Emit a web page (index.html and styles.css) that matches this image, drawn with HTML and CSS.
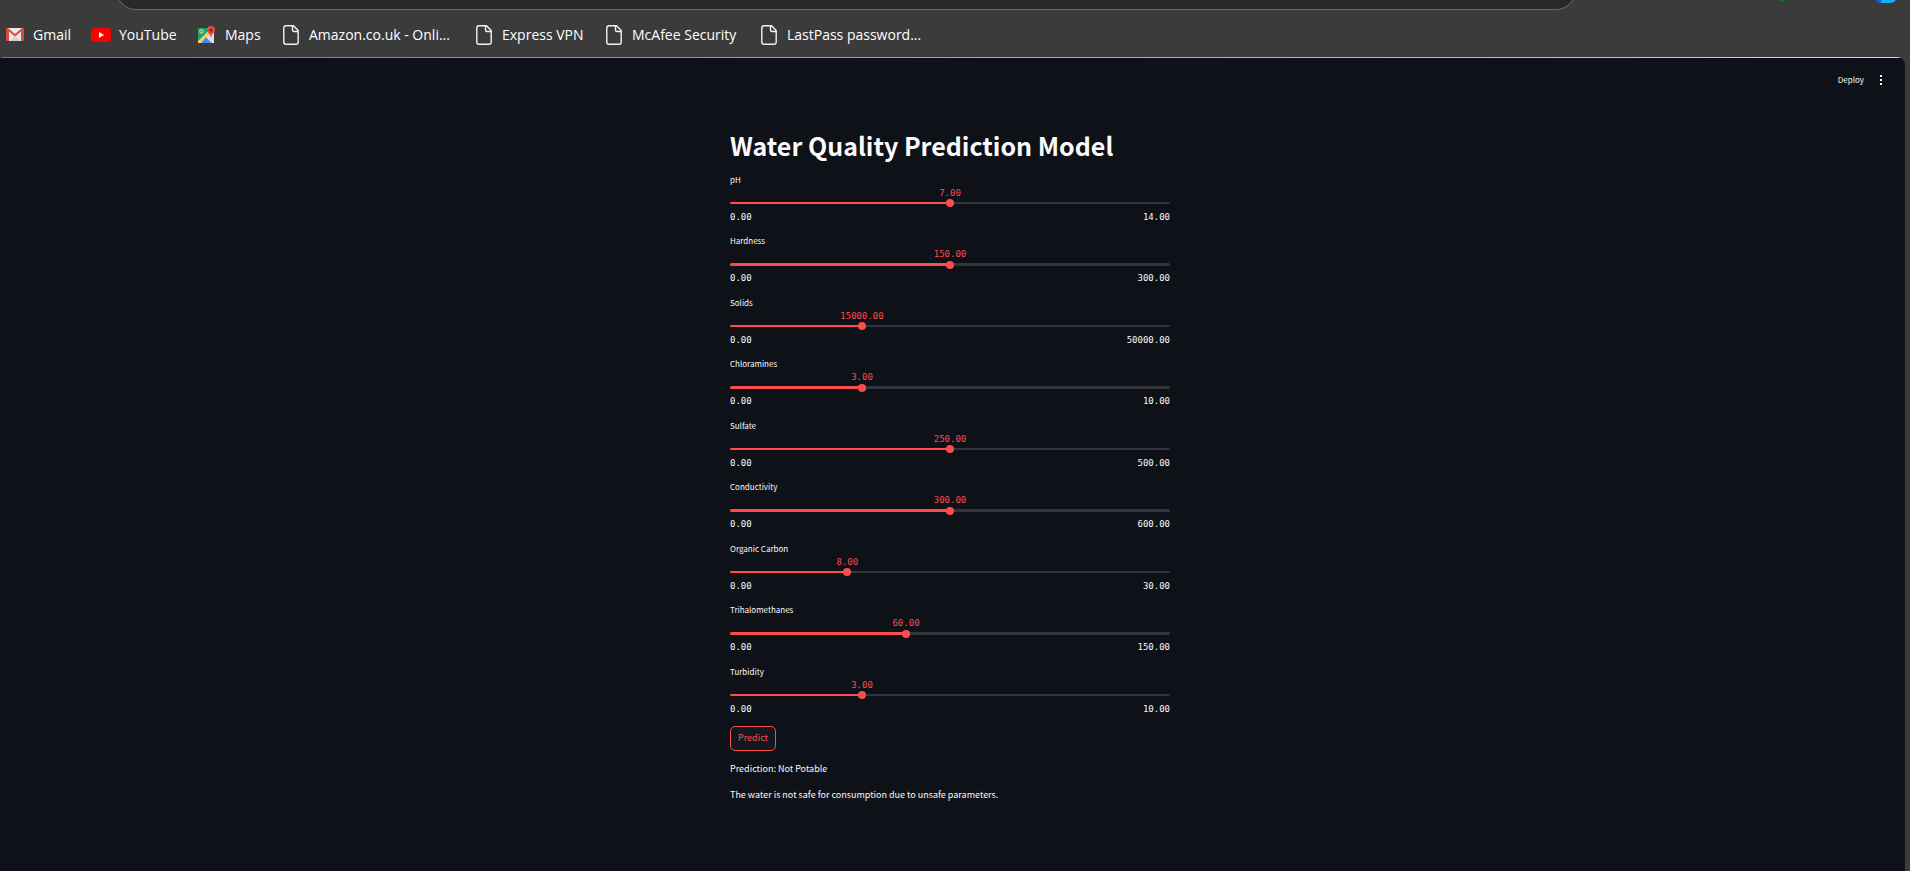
FILE: index.html
```html
<!DOCTYPE html>
<html lang="en">
<head>
<meta charset="utf-8">
<title>Water Quality Prediction Model</title>
<link rel="stylesheet" href="styles.css">
</head>
<body>
<header class="browser">
  <div class="toolbar">
    <div class="address"></div>
    <svg class="toolbar-icons" viewBox="0 0 120 10" aria-hidden="true"><circle cx="2" cy="-6" r="7" fill="#107c10"/><path d="M96 0h20q-2 3-5 3h-10q-3 0-5-3z" fill="#12b0f5"/><path d="M96 0h6l-2 3q-3-1-4-3z" fill="#2456e0"/></svg>
  </div>
  <nav class="bookmarks" aria-label="Bookmarks">
    <a class="bookmark" href="#"><svg class="icon-wide" viewBox="0 0 20 20"><path d="M2 3h16v13H2z" fill="#e9e9e9"/><path d="M5 16l5-5 5 5" fill="#d2d2d2"/><path d="M1 4q0-1 1-1h1l7 6 7-6h1q1 0 1 1v11q0 1-1 1h-2V6.500l-6 5-6-5V16H2q-1 0-1-1z" fill="#dc4a3f"/></svg>Gmail</a>
    <a class="bookmark" href="#"><svg class="icon-wide" viewBox="0 0 20 20"><rect y="3" width="20" height="14" rx="4" fill="#f00"/><path d="M8 7l5 3-5 3z" fill="#fff"/></svg>YouTube</a>
    <a class="bookmark" href="#"><svg class="icon-wide" viewBox="0 0 20 20"><path d="M1 3h16v15H1z" fill="#f1f1f1"/><path d="M1 3h13L1 17z" fill="#1fa362"/><path d="M1 18v-2L14 4l2 3L3 18z" fill="#fbd14b"/><path d="M4 18l5-6 6 6z" fill="#4489f4"/><path d="M10 11l7-3v10h-1z" fill="#dcdcdc"/><circle cx="4.500" cy="6.500" r="1.700" fill="none" stroke="#d9f2e4"/><path d="M14 1a4 4 0 0 1 4 4c0 3-3 3-4 8-1-5-4-5-4-8a4 4 0 0 1 4-4z" fill="#e24a3f"/><circle cx="14" cy="5" r="1.500" fill="#7c201a"/></svg>Maps</a>
    <a class="bookmark" href="#"><svg class="icon-page" viewBox="0 0 16 20"><path d="M3 .8h7.500l4.700 4.700V17q0 2.200-2.200 2.200H3Q.8 19.200.8 17V3Q.8.8 3 .8zM9.500 1v4q0 1.500 1.500 1.500h4"/></svg>Amazon.co.uk - Onli...</a>
    <a class="bookmark" href="#"><svg class="icon-page" viewBox="0 0 16 20"><path d="M3 .8h7.500l4.700 4.700V17q0 2.200-2.200 2.200H3Q.8 19.200.8 17V3Q.8.8 3 .8zM9.500 1v4q0 1.500 1.500 1.500h4"/></svg>Express VPN</a>
    <a class="bookmark" href="#"><svg class="icon-page" viewBox="0 0 16 20"><path d="M3 .8h7.500l4.700 4.700V17q0 2.200-2.200 2.200H3Q.8 19.200.8 17V3Q.8.8 3 .8zM9.500 1v4q0 1.500 1.500 1.500h4"/></svg>McAfee Security</a>
    <a class="bookmark" href="#"><svg class="icon-page" viewBox="0 0 16 20"><path d="M3 .8h7.500l4.700 4.700V17q0 2.200-2.200 2.200H3Q.8 19.200.8 17V3Q.8.8 3 .8zM9.500 1v4q0 1.500 1.500 1.500h4"/></svg>LastPass password...</a>
  </nav>
</header>
<div class="app">
  <div class="app-bar">
    <button class="deploy" type="button">Deploy</button>
    <button class="menu" type="button" aria-label="Main menu"><svg viewBox="0 0 10 10"><path d="M4 0h2v2H4zM4 4h2v2H4zM4 8h2v2H4z" fill="#fafafa"/></svg></button>
  </div>
  <main class="content">
    <h1>Water Quality Prediction Model</h1>
    <form class="sliders">
      <div class="slider" style="--fill:50%"><label for="ph">pH</label><div class="control"><output for="ph">7.00</output><input id="ph" type="range" min="0" max="14" step="0.01" value="7"></div><div class="limits"><span>0.00</span><span>14.00</span></div></div>
      <div class="slider" style="--fill:50%"><label for="hardness">Hardness</label><div class="control"><output for="hardness">150.00</output><input id="hardness" type="range" min="0" max="300" step="0.01" value="150"></div><div class="limits"><span>0.00</span><span>300.00</span></div></div>
      <div class="slider" style="--fill:30%"><label for="solids">Solids</label><div class="control"><output for="solids">15000.00</output><input id="solids" type="range" min="0" max="50000" step="0.01" value="15000"></div><div class="limits"><span>0.00</span><span>50000.00</span></div></div>
      <div class="slider" style="--fill:30%"><label for="chloramines">Chloramines</label><div class="control"><output for="chloramines">3.00</output><input id="chloramines" type="range" min="0" max="10" step="0.01" value="3"></div><div class="limits"><span>0.00</span><span>10.00</span></div></div>
      <div class="slider" style="--fill:50%"><label for="sulfate">Sulfate</label><div class="control"><output for="sulfate">250.00</output><input id="sulfate" type="range" min="0" max="500" step="0.01" value="250"></div><div class="limits"><span>0.00</span><span>500.00</span></div></div>
      <div class="slider" style="--fill:50%"><label for="conductivity">Conductivity</label><div class="control"><output for="conductivity">300.00</output><input id="conductivity" type="range" min="0" max="600" step="0.01" value="300"></div><div class="limits"><span>0.00</span><span>600.00</span></div></div>
      <div class="slider" style="--fill:26.67%"><label for="carbon">Organic Carbon</label><div class="control"><output for="carbon">8.00</output><input id="carbon" type="range" min="0" max="30" step="0.01" value="8"></div><div class="limits"><span>0.00</span><span>30.00</span></div></div>
      <div class="slider" style="--fill:40%"><label for="trihalomethanes">Trihalomethanes</label><div class="control"><output for="trihalomethanes">60.00</output><input id="trihalomethanes" type="range" min="0" max="150" step="0.01" value="60"></div><div class="limits"><span>0.00</span><span>150.00</span></div></div>
      <div class="slider" style="--fill:30%"><label for="turbidity">Turbidity</label><div class="control"><output for="turbidity">3.00</output><input id="turbidity" type="range" min="0" max="10" step="0.01" value="3"></div><div class="limits"><span>0.00</span><span>10.00</span></div></div>
      <button class="predict" type="button">Predict</button>
    </form>
    <p>Prediction: Not Potable</p>
    <p>The water is not safe for consumption due to unsafe parameters.</p>
  </main>
</div>
</body>
</html>
```
FILE: styles.css
```css
* { box-sizing: border-box; }
body {
  margin: 0;
  min-height: 100vh;
  display: flex;
  flex-direction: column;
  background: #3b3b3b;
  color: #fafafa;
  font-family: "Noto Sans CJK SC", "Open Sans", sans-serif;
}
button { font: inherit; color: inherit; background: none; border: 0; padding: 0; }

.toolbar {
  display: flex;
  justify-content: space-between;
  height: 10px;
  padding: 0 10px 0 116px;
  overflow: hidden;
}
.address {
  flex: 0 1 1460px;
  align-self: flex-end;
  height: 40px;
  background: #282828;
  border: 1px solid #6b6b6b;
  border-radius: 20px;
}
.toolbar-icons { width: 120px; height: 10px; }
.bookmarks {
  display: grid;
  grid-template-columns: 86px 106px 86px 193px 130px 155px auto;
  align-items: center;
  height: 47px;
  padding: 2px 0 0 5px;
}
.bookmark {
  display: flex;
  align-items: center;
  gap: 10px;
  color: #fff;
  font: 14px/18px "Open Sans", "Noto Sans", sans-serif;
  text-decoration: none;
  white-space: nowrap;
}
.icon-wide { width: 20px; height: 20px; margin-right: -2px; }
.icon-page { width: 16px; height: 20px; fill: none; stroke: #f2f2f2; stroke-width: 1.4; }

.app {
  flex: 1;
  margin-right: 5px;
  background: #0e1117;
  border-radius: 3px 8px 0 0;
  overflow: hidden;
}
.app::before {
  content: "";
  display: block;
  height: 1px;
  background: linear-gradient(90deg, #e0484a, #e3dd75);
}
.app-bar {
  display: flex;
  justify-content: flex-end;
  align-items: center;
  gap: 12px;
  height: 44px;
  padding-right: 19px;
  font-size: 8px;
  line-height: 14px;
}
.menu svg { display: block; width: 10px; height: 10px; }

.content {
  width: 100%;
  max-width: 445px;
  margin: 0 auto;
  padding: 27px 5px 0 0;
}
h1 { margin: 0 0 11px; font-size: 25px; line-height: 33px; font-weight: 700; white-space: nowrap; }
.slider { --track: 2px; --drop: 7px; padding-bottom: calc(17px - var(--drop)); }
.slider:nth-child(even) { --track: 3px; --drop: 6px; }
.slider label { display: block; font-size: 8px; line-height: 14px; }
.control {
  position: relative;
  height: calc(15px + var(--track));
  padding-top: 15px;
}
.control::after {
  content: "";
  display: block;
  height: var(--track);
  border-radius: 2px;
  background: linear-gradient(90deg, #ff4b4b var(--fill), #32353c var(--fill));
}
output, .limits { font-family: "DejaVu Sans Mono", monospace; font-size: 9px; line-height: 13px; }
output {
  position: absolute;
  top: 0;
  left: var(--fill);
  transform: translateX(-50%);
  color: #ff4b4b;
}
input[type="range"] {
  position: absolute;
  z-index: 1;
  bottom: calc(var(--track) / 2 - 4px);
  left: -4px;
  width: calc(100% + 8px);
  height: 8px;
  margin: 0;
  appearance: none;
  background: none;
}
input[type="range"]::-webkit-slider-thumb {
  appearance: none;
  width: 8px;
  height: 8px;
  border-radius: 50%;
  background: #ff4b4b;
}
.limits { display: flex; justify-content: space-between; padding-top: var(--drop); }
.predict {
  display: block;
  height: 25px;
  padding: 0 7px 2px;
  border: 1px solid #ff4b4b;
  border-radius: 5px;
  background: #131720;
  color: #ff4b4b;
  font-size: 9px;
  line-height: 20px;
}
p { margin: 10px 0 0; font-size: 9px; line-height: 16px; }
```
